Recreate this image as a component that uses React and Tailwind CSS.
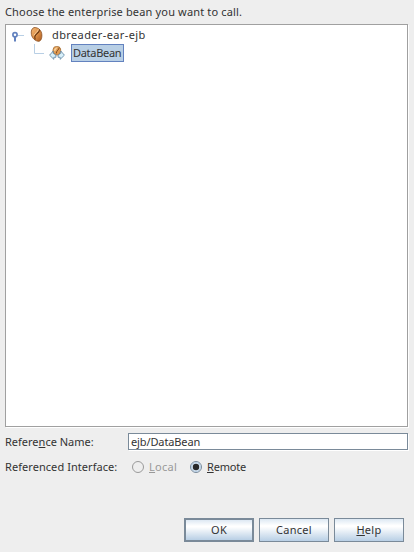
import React from "react";

function Bean() {
  return (
    <svg width="13" height="15" viewBox="0 0 13 15" className="shrink-0">
      <defs>
        <linearGradient id="bean" x1="0" y1="0" x2="1" y2="1">
          <stop offset="0" stopColor="#f0b878" />
          <stop offset="0.5" stopColor="#e09248" />
          <stop offset="1" stopColor="#a85a20" />
        </linearGradient>
      </defs>
      <path d="M4 .6C7.500 .2 10.800 2.500 11.700 6.500C12.300 10.500 11.200 13.800 9 14.300C5.500 14.300 2.300 11.500 1.400 7.500C.8 4 1.800 1.300 4 .6Z" fill="url(#bean)" stroke="#8a4e20" strokeWidth=".8" />
      <path d="M9.500 2.500C9.800 5.500 5.800 6.800 5 9C4.500 10.500 5 11.500 5.200 12.500" fill="none" stroke="#5d300e" strokeWidth="1.100" />
      <path d="M8.300 2.300C8.300 4.800 4.700 6 3.900 8.500" fill="none" stroke="#f9dcae" strokeWidth=".8" />
    </svg>
  );
}

function BeanArrows() {
  return (
    <svg width="16" height="14" viewBox="0 0 16 14" className="shrink-0">
      <path d="M4.800 1.500C6.500 -.1 10.500 0 11.500 2.500C12.400 5.500 10.500 8.800 8.300 9C5.500 9 3.500 7 4 4Z" fill="#e09c55" stroke="#a0682f" strokeWidth=".8" />
      <path d="M4.700 4Q6 1.200 8.500 1.300L6 5.500Z" fill="#f6d09b" />
      <path d="M10.300 1.500C10 4 7.500 4.200 7.200 7.500" fill="none" stroke="#7a451a" strokeWidth=".9" />
      <path d="M.6 9.200L4.200 5V7.300L6.900 9V11.300H4.800V13.300Z" fill="#d8f0fa" stroke="#5b82a0" strokeWidth=".8" />
      <path d="M15.400 9.200L11.800 5V7.300L9.100 9V11.300H11.200V13.300Z" fill="#d8f0fa" stroke="#5b82a0" strokeWidth=".8" />
    </svg>
  );
}

function Radio({ checked }) {
  return (
    <svg width="12" height="12" viewBox="0 0 12 12" className="shrink-0">
      <circle cx="6" cy="6" r="5.500" fill={checked ? "#dce8f3" : "#eeeeee"} stroke={checked ? "#7a8a99" : "#999999"} />
      {checked && <circle cx="6" cy="6" r="4.500" fill="none" stroke="#b8cfe5" />}
      {checked && <circle cx="6" cy="6" r="3.200" fill="#292929" />}
    </svg>
  );
}

function Mnemonic({ children }) {
  return <span className="underline decoration-1 underline-offset-1 [text-decoration-skip-ink:none]">{children}</span>;
}

const button =
  "flex h-6 w-[70px] items-center justify-center border-[#7a8a99] bg-[linear-gradient(180deg,#dde8f3_0%,#ffffff_30%,#ffffff_35%,#b8cfe5_100%)]";

export default function App() {
  return (
    <main className="flex h-[552px] w-[414px] flex-col overflow-hidden bg-[#eeeeee] pl-[5px] font-['Noto_Sans',sans-serif] text-[11px] leading-[15px] text-[#333333]">
      <div className="h-6 pt-1 tracking-[0.16px] whitespace-nowrap">Choose the enterprise bean you want to call.</div>

      <section className="h-[403px] w-[403px] shrink-0 border border-[#a0a0a0] bg-white shadow-[1px_1px_0_#ffffff]">
        <div className="flex h-[18px] items-start pt-[2px] pl-[6px]">
          <svg width="12" height="16" viewBox="0 0 12 16" className="shrink-0">
            <path d="M6 8.500H12" stroke="#b8cfe5" />
            <path d="M3 10V14.500" stroke="#6382bf" strokeWidth="2" />
            <circle cx="3" cy="7.800" r="2.100" fill="#fff" stroke="#6382bf" strokeWidth="1.700" />
          </svg>
          <span className="ml-[6px] flex"><Bean /></span>
          <span className="ml-[9px] tracking-[0.38px]">dbreader-ear-ejb</span>
        </div>
        <div className="flex h-[19px] items-start pt-px pl-[28px]">
          <svg width="10" height="18" viewBox="0 0 10 18" className="shrink-0">
            <path d="M.5 0V9.500H10" fill="none" stroke="#b8cfe5" />
          </svg>
          <span className="ml-[5px] flex pt-[2px]"><BeanArrows /></span>
          <span className="ml-[6px] flex h-[18px] w-[53px] shrink-0 items-start border border-[#6382bf] bg-[#b8cfe5] pl-px tracking-[-0.3px]">DataBean</span>
        </div>
      </section>

      <div className="mt-[6px] flex h-[17px] items-center">
        <label className="w-[123px]">Refere<Mnemonic>n</Mnemonic>ce Name:</label>
        <div className="flex h-[17px] w-[280px] items-center border border-[#7a8a99] bg-white pl-[2px] tracking-[-0.12px] shadow-[1px_1px_0_#ffffff]">ejb/DataBean</div>
      </div>

      <div className="mt-[9px] flex h-4 items-center">
        <span className="-mt-[2px] w-[127px] tracking-[0.06px]">Referenced Interface:</span>
        <Radio />
        <span className="-mt-[2px] ml-[5px] w-[41px] tracking-[0.3px] text-[#999999]"><Mnemonic>L</Mnemonic>ocal</span>
        <Radio checked />
        <span className="-mt-[2px] ml-[5px] tracking-[-0.2px]"><Mnemonic>R</Mnemonic>emote</span>
      </div>

      <footer className="mt-[43px] flex gap-[5px] pl-[179px] tracking-[0.3px]">
        <div className={button + " border-2 pb-[2px]"}>OK</div>
        <div className={button + " border pb-[2px]"}>Cancel</div>
        <div className={button + " border pb-[2px]"}><span><Mnemonic>H</Mnemonic>elp</span></div>
      </footer>
    </main>
  );
}
